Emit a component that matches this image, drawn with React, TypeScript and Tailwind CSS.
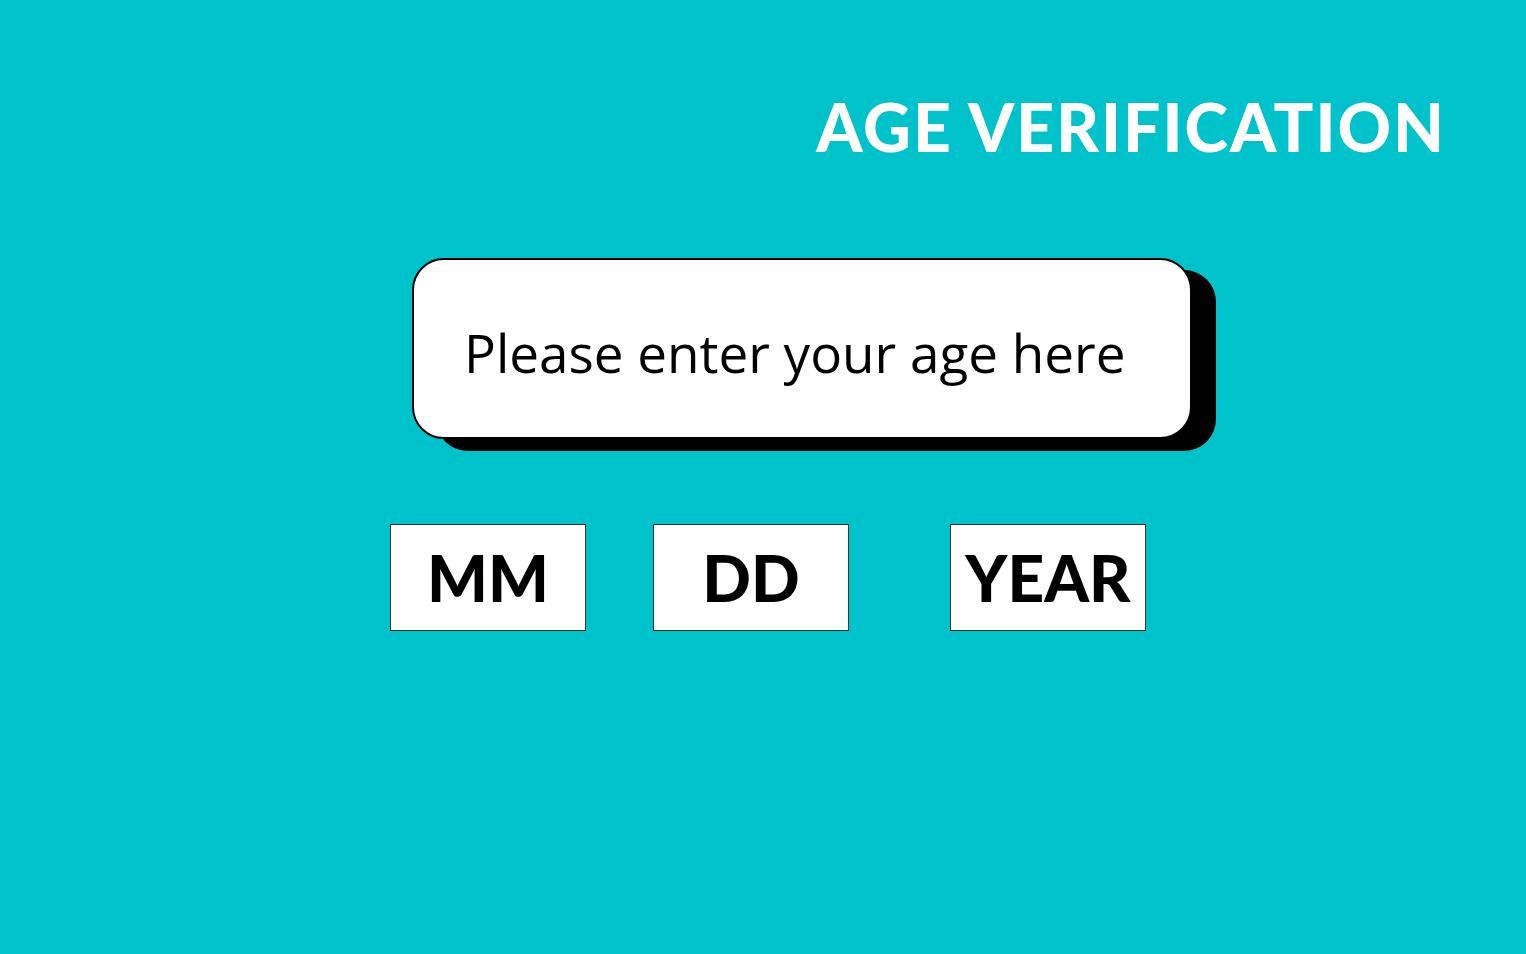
export default function App() {
  return (
    <div className="h-screen w-full overflow-hidden bg-[#00c2cb] flex flex-col">
      <div className="flex justify-end pr-[80px] pt-[94px]">
        <h1 className="font-['Lato',sans-serif] font-black text-[66px] leading-none tracking-[2px] text-white">
          AGE VERIFICATION
        </h1>
      </div>
      <div className="pl-[412px] mt-[98px]">
        <div className="w-[780px] h-[181px] rounded-[32px] border-2 border-black bg-white shadow-[24px_12px_0_0_#000] flex items-center pl-[50px] pt-[8px]">
          <span className="font-['Open_Sans',sans-serif] text-[53px] leading-none text-black">
            Please enter your age here
          </span>
        </div>
      </div>
      <div className="flex pl-[390px] mt-[85px]">
        <div className="w-[196px] h-[107px] border border-[#333] bg-white flex items-center justify-center">
          <span className="font-['Lato',sans-serif] font-black text-[64px] leading-none text-black">MM</span>
        </div>
        <div className="ml-[67px] w-[196px] h-[107px] border border-[#333] bg-white flex items-center justify-center">
          <span className="font-['Lato',sans-serif] font-black text-[64px] leading-none text-black">DD</span>
        </div>
        <div className="ml-[101px] w-[196px] h-[107px] border border-[#333] bg-white flex items-center justify-center">
          <span className="font-['Lato',sans-serif] font-black text-[64px] leading-none text-black">YEAR</span>
        </div>
      </div>
    </div>
  );
}
